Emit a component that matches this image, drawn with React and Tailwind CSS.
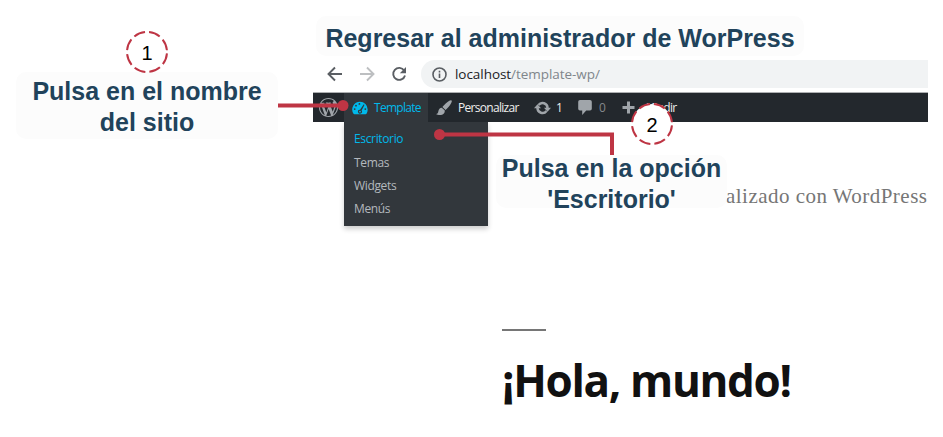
import React from "react";

const WordPressIcon = () => (
  <svg width="19" height="19" viewBox="0 0 20 20" className="shrink-0 text-[#a0a5aa]">
    <path
      fill="currentColor"
      d="M20 10c0-5.51-4.49-10-10-10C4.48 0 0 4.49 0 10c0 5.52 4.48 10 10 10 5.51 0 10-4.48 10-10zM7.78 15.37L4.37 6.22c.55-.02 1.17-.08 1.17-.08.5-.06.44-1.13-.06-1.11 0 0-1.45.11-2.37.11-.18 0-.37 0-.58-.01C4.12 2.69 6.87 1.11 10 1.11c2.33 0 4.45.87 6.05 2.34-.68-.11-1.65.39-1.65 1.58 0 .74.45 1.36.9 2.1.35.61.55 1.36.55 2.46 0 1.49-1.4 5-1.4 5l-3.03-8.37c.54-.02.82-.17.82-.17.5-.05.44-1.25-.06-1.22 0 0-1.44.12-2.38.12-.87 0-2.33-.12-2.33-.12-.5-.03-.56 1.2-.06 1.22l.92.08 1.26 3.41zM17.41 10c.24-.64.74-1.87.43-4.25.7 1.29 1.05 2.71 1.05 4.25 0 3.29-1.73 6.24-4.4 7.78.97-2.59 1.94-5.2 2.92-7.78zM6.1 18.09C3.12 16.65 1.11 13.53 1.11 10c0-1.3.23-2.48.72-3.59C3.25 10.3 4.67 14.2 6.1 18.09zm4.03-6.63l2.58 6.98c-.86.29-1.76.45-2.71.45-.79 0-1.57-.11-2.29-.33.81-2.38 1.62-4.74 2.42-7.1z"
    />
  </svg>
);

const DashboardIcon = () => (
  <svg width="16" height="14" viewBox="0 0 16 14" className="shrink-0">
    <path
      fill="#00b9eb"
      d="M8 .8a7.7 7.7 0 0 1 7.7 7.7c0 1.6-.4 3-1.2 4.2-.2.3-.5.5-.9.5H2.4c-.4 0-.7-.2-.9-.5A7.7 7.7 0 0 1 8 .8z"
    />
    <g fill="#32373c">
      <circle cx="7.4" cy="2.9" r=".9" />
      <circle cx="4" cy="4.7" r=".9" />
      <circle cx="2.700" cy="8.100" r=".9" />
      <circle cx="13.300" cy="8.100" r=".9" />
      <path d="M11.8 3.300c.6.300.7.700.4 1.300L9.600 9.600a2 2 0 1 1-1.600-.9z" />
    </g>
    <circle cx="8" cy="10.600" r=".9" fill="#00b9eb" />
  </svg>
);

const BrushIcon = () => (
  <svg width="16" height="16" viewBox="0 0 16 16" className="shrink-0" fill="#a0a5aa">
    <path d="M15.500.5c.6.600.3 1.500-.4 2.700-1.500 2.500-3.500 5.200-5.500 6.700L6.400 7C8.300 4.500 11 2.100 13.300.7c.9-.5 1.700-.7 2.200-.2z" />
    <path d="M5.800 7.800l3 2.800c.2 2.400-1.400 4.100-3.700 4.400-1.900.3-3.900-.1-5-1 1.500-.3 1.900-1 2.200-2.500.4-2.200 1.600-3.600 3.500-3.700z" />
  </svg>
);

const UpdateIcon = () => (
  <svg width="17" height="14" viewBox="0 0 17 14" className="shrink-0">
    <g fill="none" stroke="#a0a5aa" strokeWidth="2.500">
      <path d="M4.500 4A5 5 0 0 1 13.500 7" />
      <path d="M12.500 10A5 5 0 0 1 3.500 7" />
    </g>
    <path fill="#a0a5aa" d="M10 6.800h7L13.500 10.700zM0 7.200h7L3.500 3.300z" />
  </svg>
);

const CommentIcon = () => (
  <svg width="14" height="15" viewBox="0 0 14 15" className="shrink-0">
    <path fill="#a0a5aa" d="M2 0h10a1.800 1.800 0 0 1 1.800 1.800v7A1.800 1.800 0 0 1 12 10.600H8.200L4.200 14.900V10.600H2A1.800 1.800 0 0 1 .2 8.800v-7A1.800 1.800 0 0 1 2 0z" />
  </svg>
);

const PlusIcon = () => (
  <svg width="13" height="13" viewBox="0 0 13 13" className="shrink-0">
    <path fill="#a0a5aa" d="M5 .5h3V5h4.500v3H8v4.500H5V8H.5V5H5z" />
  </svg>
);

const StepCircle = ({ n }) => (
  <div className="relative h-[42px] w-[42px]">
    <svg width="42" height="42" viewBox="0 0 42 42" className="absolute inset-0">
      <circle
        cx="21" cy="21" r="20" fill="#fff" stroke="#be3544" strokeWidth="2"
        strokeDasharray="11.560 4.148" strokeDashoffset="-1.500"
      />
    </svg>
    <span className="relative flex h-full items-center justify-center pt-px text-[20px] leading-none text-black">{n}</span>
  </div>
);

const BrowserToolbar = () => (
  <div className="flex h-[28px] items-center">
    <svg width="108" height="28" viewBox="0 0 108 28" className="shrink-0" fill="none" strokeWidth="1.900">
      <path stroke="#5a5e63" d="M29 14H16M22 7.500 15.500 14l6.500 6.500" />
      <path stroke="#bdbfc1" d="M47 14h13M54 7.500l6.500 6.500-6.500 6.500" />
      <path stroke="#5a5e63" d="M91.200 10.500A6 6 0 1 0 92 15.500" />
      <path fill="#5a5e63" d="M93 7v6.200h-6.200z" />
    </svg>
    <div className="flex h-full flex-1 items-center rounded-l-full bg-[#f1f3f4] pl-[11px]">
      <svg width="15" height="15" viewBox="0 0 15 15" fill="none" stroke="#5a5e63" strokeWidth="1.600">
        <circle cx="7.500" cy="7.500" r="6.500" />
        <path d="M7.500 6.600V11M7.500 3.700v1.700" />
      </svg>
      <span className="ml-[8px] font-['Open_Sans','Noto_Sans',sans-serif] text-[13.500px] tracking-[-0.050px] text-[#80868b]">
        <span className="text-[#202124]">localhost</span>/template-wp/
      </span>
    </div>
  </div>
);

const AdminBar = () => (
  <div className="mt-[4px] flex h-[30px] items-center border-t border-[#aeb0b2] bg-[#23282d] font-['Open_Sans','Noto_Sans',sans-serif] text-[12px] text-[#eee]">
    <div className="flex w-[31px] pb-px pl-[6px]">
      <WordPressIcon />
    </div>
    <div className="flex h-full w-[84px] items-center bg-[#32373c] pl-[8px] text-[#00b9eb]">
      <DashboardIcon />
      <span className="ml-[6px] tracking-[-0.700px]">Template</span>
    </div>
    <div className="flex w-[106px] items-center pl-[8px]">
      <BrushIcon />
      <span className="ml-[6px] font-medium tracking-[-0.700px]">Personalizar</span>
    </div>
    <div className="flex w-[44px] items-center">
      <UpdateIcon />
      <span className="ml-[5px] font-medium">1</span>
    </div>
    <div className="flex w-[44px] items-center">
      <CommentIcon />
      <span className="ml-[7px] text-[#84888c]">0</span>
    </div>
    <PlusIcon />
    <span className="ml-[9px] font-medium tracking-[-0.750px]">Añadir</span>
  </div>
);

const SiteMenu = () => (
  <ul className="ml-[31px] flex h-[104px] w-[144px] flex-col bg-[#32373c] pt-[5px] pl-[10px] font-['Open_Sans','Noto_Sans',sans-serif] text-[12px] tracking-[-0.350px] text-[#b4b9be] shadow-[0_3px_5px_rgba(0,0,0,0.2)]">
    <li className="h-[24px] leading-[24px] text-[#00b9eb]">Escritorio</li>
    <li className="h-[23px] leading-[23px]">Temas</li>
    <li className="h-[23px] leading-[23px]">Widgets</li>
    <li className="h-[23px] leading-[23px]">Menús</li>
  </ul>
);

export default function App() {
  return (
    <div className="relative flex h-[437px] w-[943px] overflow-hidden bg-white font-['Liberation_Sans',Arial,sans-serif]">
      <aside className="flex w-[294px] shrink-0 flex-col items-center pt-[31px]">
        <StepCircle n="1" />
        <div className="-mt-px h-[67px] w-[262px] rounded-[10px] bg-[#fcfcfc] pt-[4px] text-center text-[25px] leading-[31px] font-bold whitespace-nowrap text-[#21435b]">
          Pulsa en el nombre
          <br />
          del sitio
        </div>
      </aside>

      <main className="ml-[19px] w-[615px] shrink-0 pt-[16px]">
        <h1 className="ml-[3px] h-[40px] w-[488px] rounded-[10px] bg-[#fcfcfc] text-center text-[25px] leading-[44px] font-bold whitespace-nowrap text-[#21435b]">
          Regresar al administrador de WorPress
        </h1>
        <div className="mt-[4px]">
          <BrowserToolbar />
          <AdminBar />
          <SiteMenu />
        </div>
        <article className="ml-[189px] pt-[103px]">
          <div className="h-[2px] w-[44px] bg-[#767676]" />
          <h2 className="mt-[19px] font-['Open_Sans','Noto_Sans',sans-serif] text-[44px] leading-[60px] font-bold tracking-[-1.350px] whitespace-nowrap text-[#111]">
            ¡Hola, mundo!
          </h2>
        </article>
      </main>

      <p className="absolute top-[184px] left-[726px] font-['Liberation_Serif',serif] text-[21px] leading-[24px] tracking-[0.470px] whitespace-nowrap text-[#767676]">
        alizado con WordPress
      </p>

      <svg width="943" height="437" viewBox="0 0 943 437" className="absolute inset-0" fill="none">
        <path stroke="#be3544" strokeWidth="4" d="M278 105.500h64M440 134.500h172V155" />
        <circle cx="343" cy="105.500" r="5.500" fill="#be3544" />
        <circle cx="439.500" cy="134.500" r="5.500" fill="#be3544" />
      </svg>

      <div className="absolute top-[155px] left-[496px] h-[53px] w-[231px] rounded-[10px] bg-[#fcfcfc] text-center text-[25px] leading-[31px] font-bold whitespace-nowrap text-[#21435b]">
        <div className="-mt-[2px]">
          Pulsa en la opción
          <br />
          'Escritorio'
        </div>
      </div>

      <div className="absolute top-[103px] left-[631px]">
        <StepCircle n="2" />
      </div>
    </div>
  );
}
